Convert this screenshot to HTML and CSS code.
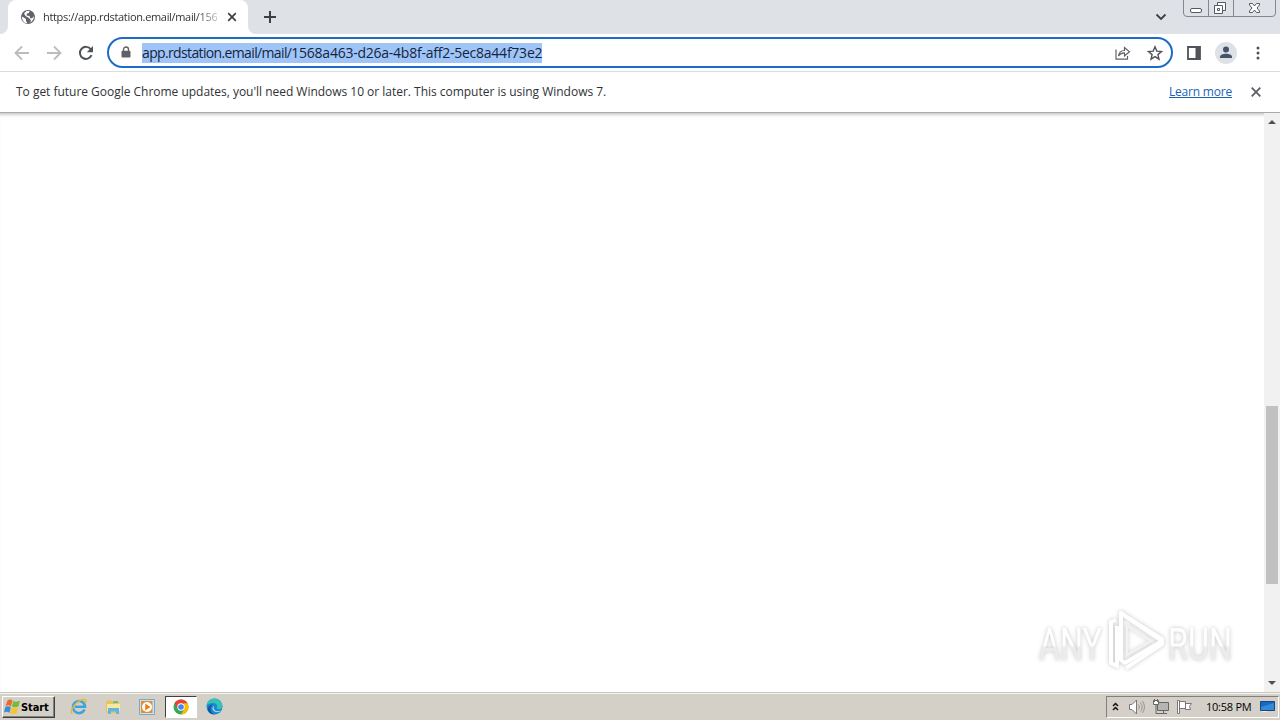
FILE: index.html
```
<!DOCTYPE html>
<html lang="en">
<head>
    <meta charset="UTF-8">
    <title>app.rdstation.email</title>
    <link rel="stylesheet" href="styles.css">
</head>
<body>
<div class="desktop">
    <header class="tab-strip">
        <div class="edge"></div>
        <div class="tab">
            <svg width="16" height="16" viewBox="0 0 16 16"><circle cx="8" cy="8" r="7" fill="#5f6368"/><path d="M2.200 7.500 6 10v2l1.500 2.200C4 14.500 1.500 11 2.200 7.500zM6.500 1.900 9.500 2l-.5 2-2 .5-.5 2 3 .5 1 2.500 2-.5 1.500-2c0 3-1.500 5.500-4 6.500l1-2-2-2.500-3.500-2-1.500-2.500z" fill="#fff"/></svg>
            <span class="tab-title">https://app.rdstation.email/mail/156</span>
            <svg class="tab-close" width="10" height="10" viewBox="0 0 10 10"><path d="M1.200 1.200l7.600 7.600M8.800 1.200L1.200 8.800" stroke="#3c4043" stroke-width="1.700"/></svg>
        </div>
        <div class="after-tab"></div>
        <div class="strip-rest">
            <svg width="14" height="14" viewBox="0 0 14 14"><path d="M7 1v12M1 7h12" stroke="#3c4043" stroke-width="2"/></svg>
            <svg class="tab-search" width="12" height="8" viewBox="0 0 12 8"><path d="M1.500 1.500 6 6l4.500-4.500" fill="none" stroke="#3c4043" stroke-width="1.800"/></svg>
            <svg class="window-buttons" width="94" height="18" viewBox="0 0 94 18">
                <path d="M.5 0v13q0 3.500 3.500 3.500h85q3.500 0 3.500-3.500V0M25.500 0v16M50.500 0v16" fill="none" stroke="#83878f"/>
                <g fill="#fff" stroke="#555a62">
                    <rect x="7.500" y="8.500" width="11" height="4" rx="1.500"/>
                    <path d="M34.500 2.500h8v8h-8z"/><path d="M31.500 5.500h8v8h-8zM34.500 8.500h2v2h-2z"/>
                    <path d="M66.500 3.500h3l2 2.500 2-2.500h3v1.500L74 8l2.500 3v1.500h-3l-2-2.500-2 2.500h-3V11L69 8l-2.500-3z"/>
                </g>
            </svg>
        </div>
    </header>

    <nav class="toolbar">
        <svg class="nav-icon" width="16" height="16" viewBox="0 0 16 16"><path d="M15 8H2M8 1.500 1.500 8 8 14.500" fill="none" stroke="#babcbe" stroke-width="1.800"/></svg>
        <svg class="nav-icon" width="16" height="16" viewBox="0 0 16 16"><path d="M1 8h13M8 1.500 14.500 8 8 14.500" fill="none" stroke="#babcbe" stroke-width="1.800"/></svg>
        <svg class="nav-icon" width="16" height="16" viewBox="0 0 16 16"><path d="M13.500 10.200A6 6 0 1 1 12.800 4.300" fill="none" stroke="#505357" stroke-width="2"/><path d="M15 1v6.200H8.800z" fill="#505357"/></svg>
        <div class="address-bar">
            <svg class="lock" width="10" height="13" viewBox="0 0 10 13"><path d="M2.500 6V3.500a2.500 2.500 0 0 1 5 0V6" fill="none" stroke="#5f6368" stroke-width="1.400"/><rect x=".5" y="4.800" width="9" height="6.700" rx="1" fill="#5f6368"/></svg>
            <span class="url"><span class="host">app.rdstation.email/mail/</span>1568a463-d26a-4b8f-aff2-5ec8a44f73e2</span>
            <svg class="share" width="16" height="16" viewBox="0 0 16 16"><path d="M1 4.500v9.700h11.500V11M3.500 11c.5-4 2.500-5.500 6-5.500v-3l5 4.200-5 4.200v-3c-3 0-4.500.8-6 3.100z" fill="none" stroke="#5f6368" stroke-width="1.200"/></svg>
            <svg width="16" height="16" viewBox="0 0 16 16"><path d="m8 1.800 1.800 4.300 4.700.4-3.600 3.100 1.100 4.600L8 11.700l-4 2.500 1.100-4.600-3.600-3.100 4.700-.4z" fill="none" stroke="#505357" stroke-width="1.400"/></svg>
        </div>
        <svg class="side-panel" width="14" height="14" viewBox="0 0 14 14"><path d="M1 1h12v12H1z" fill="none" stroke="#505357" stroke-width="1.800"/><path d="M8.500 1H13v12H8.500z" fill="#505357"/></svg>
        <svg class="profile" width="22" height="22" viewBox="0 0 22 22"><circle cx="11" cy="11" r="11" fill="#dee1e6"/><circle cx="11" cy="7.500" r="3" fill="#46536b"/><path d="M5 16v-1c0-4.300 12-4.300 12 0v1z" fill="#46536b"/></svg>
        <svg class="menu-dots" width="4" height="14" viewBox="0 0 4 14"><g fill="#505357"><circle cx="2" cy="2" r="1.500"/><circle cx="2" cy="7" r="1.500"/><circle cx="2" cy="12" r="1.500"/></g></svg>
    </nav>

    <div class="infobar">
        <span class="message">To get future Google Chrome updates, you'll need Windows 10 or later. This computer is using Windows 7.</span>
        <a class="learn-more">Learn more</a>
        <svg width="10" height="10" viewBox="0 0 10 10"><path d="M.7.7l8.600 8.600M9.300.7L.7 9.300" stroke="#5f6368" stroke-width="1.900"/></svg>
    </div>

    <main class="page">
        <div class="scrollbar">
            <svg width="8" height="4" viewBox="0 0 8 4"><path d="M0 4 4 0l4 4z" fill="#505050"/></svg>
            <div class="thumb"></div>
            <svg width="8" height="4" viewBox="0 0 8 4"><path d="M0 0l4 4 4-4z" fill="#505050"/></svg>
        </div>
        <svg class="watermark" width="220" height="72" viewBox="0 0 220 72">
            <defs>
                <linearGradient id="fade" x1="0" y1="0" x2="0" y2="1"><stop offset=".5" stop-color="#fff"/><stop offset=".55" stop-color="#ececec"/></linearGradient>
            </defs>
            <g class="mark">
                <text x="9" y="54" textLength="63" lengthAdjust="spacingAndGlyphs" fill="url(#fade)">ANY</text>
                <text x="138" y="54" textLength="64" lengthAdjust="spacingAndGlyphs" fill="url(#fade)">RUN</text>
                <path class="play-back" d="M86 14l-5 2v41l6 3v-40"/>
                <path class="play" d="M91 7v47l4 3 37-22z"/>
                <path class="play" d="M90 7l42 26v5L96 62"/>
                <path class="play-inner" d="M97 20v29l24-14z"/>
            </g>
        </svg>
    </main>

    <footer class="taskbar">
        <div class="start">
            <svg width="17" height="16" viewBox="0 0 17 16"><path d="M3.500 1.500c2-1.500 4-1 5 0L7 7.500c-1.500-1.500-3-1.500-5.500-.5z" fill="#e96b2d"/><path d="M9.300 2c2 1 4 1 6.700-.5l-1.500 6c-2 1-4.500 1-6.500.2z" fill="#79b83b"/><path d="M1.300 8c2-1 4-1 5.500.3l-1.300 5.700C4 12.500 2 12.500 0 13.500z" fill="#3f8ad0"/><path d="M7.700 8.700c2 .8 4 .8 6.500-.2l-1.500 5.700c-2 1-4.300 1-6.300 0z" fill="#f6c52b"/></svg>
            <span>Start</span>
        </div>
        <div class="launchers">
            <svg width="18" height="18" viewBox="0 0 18 18"><path d="M14.500 11.500A6 6 0 1 1 15 8.800H5" fill="none" stroke="#39a5dc" stroke-width="2.600"/><path d="M2.500 15.500C-2 15 6 2 14 1.500c3-.2 2 3 1 4" fill="none" stroke="#e6b637" stroke-width="1.300"/></svg>
            <svg width="18" height="18" viewBox="0 0 18 18"><path d="M2 3l5-1 1 2h7v11H2z" fill="#e7c45d"/><path d="M3 6h13v7H3z" fill="#f8e7a0"/><path d="M4 10h11v6h-3v-2.500H7V16H4z" fill="#62b6dc"/><path d="M9 3h5v2H9z" fill="#76bd72"/></svg>
            <svg width="18" height="18" viewBox="0 0 18 18"><path d="M1.500 1.500h15v15h-15z" fill="#cae4f7" stroke="#6daad5"/><path d="M3 3h11.500v12H3z" fill="#ed8b22"/><circle cx="9" cy="9" r="5" fill="#fff"/><path d="M7.200 5.500 12.500 9 7.200 12.500z" fill="#ec7d17"/></svg>
            <div class="active-app">
                <svg width="16" height="16" viewBox="0 0 16 16"><circle cx="8" cy="8" r="7.500" fill="#34a853"/><path d="M8 8 1.500 4.250A7.500 7.500 0 0 1 14.500 4.250z" fill="#ea4335"/><path d="M8 4.250h6.500A7.500 7.500 0 0 1 8 15.500l3.200-5.600z" fill="#fbbc04"/><path d="M8 8l3.200-3.750H1.500L4.750 10z" fill="#ea4335"/><circle cx="8" cy="8" r="3.700" fill="#fff"/><circle cx="8" cy="8" r="2.800" fill="#4285f4"/></svg>
            </div>
            <svg width="17" height="17" viewBox="0 0 17 17"><circle cx="8.500" cy="8.500" r="8" fill="#168bd4"/><path d="M.5 7.500C1-1 16-2 16.500 8c0 3.500-4.500 4-6 2 2-2 0-5-3.500-5C3.500 5 1 6.500.5 7.500z" fill="#35c4b2"/><path d="M7 6.500C3 9 4.500 16 9.500 16.500 4 17 1 13 2 10c.7-2.500 3-3.500 5-3.500z" fill="#1257a5"/><path d="M8 7.500c-2 5 3.500 7 7 5-3 3.500-9 1-8.500-3z" fill="#d7dad7"/></svg>
        </div>
        <div class="tray">
            <svg width="7" height="9" viewBox="0 0 7 9"><path d="M1 4l2.500-2.500L6 4M1 8l2.500-2.500L6 8" fill="none" stroke="#111" stroke-width="1.500"/></svg>
            <svg class="speaker" width="17" height="16" viewBox="0 0 17 16"><path d="M1.500 5.500H4L8.500 1v14L4 10.500H1.500z" fill="#fff" stroke="#777"/><path d="M10.500 5.500q2 2.500 0 5M12.500 3.500q3.500 4.500 0 9M14.500 2q4 6 0 12" fill="none" stroke="#999"/></svg>
            <svg class="network" width="17" height="16" viewBox="0 0 17 16"><path d="M4.500 3.500h11v8h-11zM6 14.500h8M10.500 12v2" fill="#b5b5b5" stroke="#666"/><path d="M3 6v8.500h3" fill="none" stroke="#666"/><path d="M.5 1.500h5v4h-5z" fill="#fff" stroke="#666"/><path d="M1.500 0v3M4.500 0v3" stroke="#666"/></svg>
            <svg class="flag" width="16" height="16" viewBox="0 0 16 16"><path d="M.5 1.500h2v13h-2zM2.500 2.500h6v7h-6zM8.500 4.500h6l-2 3 1 3H8.500z" fill="#fff" stroke="#777"/></svg>
            <span class="clock">10:58 PM</span>
            <svg width="16" height="13" viewBox="0 0 16 13"><path d="M.5 1.500h14v9H.5z" fill="#1769c2" stroke="#17477e"/><path d="M1 7l13-4v7H1z" fill="#3489d8"/><path d="M2 11.500h5" stroke="#eee"/></svg>
        </div>
    </footer>
</div>
</body>
</html>
```
FILE: styles.css
```
body {
    margin: 0;
    font-family: "Open Sans", "Noto Sans", sans-serif;
    color: #303236;
    background: #fff;
}

svg {
    display: block;
    flex-shrink: 0;
}

.desktop {
    display: flex;
    flex-direction: column;
    width: 1280px;
    height: 720px;
    overflow: hidden;
}

.tab-strip {
    display: flex;
    height: 34px;
    background: #fff;
}

.edge {
    width: 8px;
    background: #dee1e6;
    border-bottom-right-radius: 8px;
}

.tab {
    display: flex;
    align-items: center;
    box-sizing: border-box;
    width: 240px;
    padding: 0 11px 0 12px;
    background: linear-gradient(#dee1e6 50%, #fff 50%);
    position: relative;
    z-index: 0;
}

.tab::before {
    content: "";
    position: absolute;
    inset: 0;
    z-index: -1;
    background: #fff;
    border-radius: 8px 8px 0 0;
}

.tab-title {
    margin-left: 7px;
    padding-bottom: 1px;
    white-space: nowrap;
    font-size: 11px;
    letter-spacing: -0.33px;
    -webkit-mask-image: linear-gradient(to right, #000 88%, rgba(0, 0, 0, 0.3));
    mask-image: linear-gradient(to right, #000 88%, rgba(0, 0, 0, 0.3));
}

.tab-close {
    margin-left: auto;
}

.after-tab {
    width: 15px;
    background: #dee1e6;
    border-bottom-left-radius: 8px;
}

.strip-rest {
    display: flex;
    flex: 1;
    align-items: center;
    padding-right: 3px;
    background: #dee1e6;
}

.tab-search {
    margin: 0 16px 0 auto;
}

.window-buttons {
    align-self: flex-start;
}

.toolbar {
    display: flex;
    align-items: center;
    box-sizing: border-box;
    height: 38px;
    padding-left: 14px;
    border-bottom: 1px solid #dadce0;
}

.nav-icon {
    margin-right: 16px;
}

.address-bar {
    display: flex;
    align-items: center;
    box-sizing: border-box;
    width: 1066px;
    height: 31px;
    margin-left: -3px;
    padding: 0 8px 0 12px;
    border: 2px solid #1d6bc9;
    border-radius: 16px;
}

.url {
    height: 20px;
    margin: 0 auto 0 11px;
    line-height: 19px;
    font-size: 14px;
    letter-spacing: -0.24px;
    white-space: nowrap;
    background: #9fc5f8;
    color: #15243c;
}

.host {
    letter-spacing: -0.64px;
}

.share {
    margin-right: 16px;
}

.side-panel {
    margin-left: 14px;
}

.profile {
    margin-left: 14px;
}

.menu-dots {
    margin-left: 19px;
}

.infobar {
    display: flex;
    align-items: center;
    box-sizing: border-box;
    height: 41px;
    padding: 0 19px 0 16px;
    border-bottom: 1px solid #aaa;
    font-size: 12px;
    letter-spacing: -0.02px;
}

.message {
    padding-bottom: 2px;
    white-space: nowrap;
}

.learn-more {
    margin: 0 19px 0 auto;
    padding-bottom: 2px;
    letter-spacing: -0.2px;
    color: #1a64b5;
    text-decoration: underline;
}

.page {
    display: flex;
    justify-content: flex-end;
    position: relative;
    height: 579px;
    box-shadow: inset 0 4px 3px -2px #ccc;
}

.scrollbar {
    display: flex;
    flex-direction: column;
    align-items: center;
    box-sizing: border-box;
    width: 16px;
    padding: 7px 0;
    background: #f1f1f1;
}

.thumb {
    width: 12px;
    height: 178px;
    margin: 282px 0 auto;
    background: #c1c1c1;
}

.watermark {
    position: absolute;
    right: 30px;
    bottom: 14px;
}

.mark {
    filter: drop-shadow(0 0 2px #c4c4c4);
    font-family: Roboto, sans-serif;
    font-size: 44px;
}

.play,
.play-back,
.play-inner {
    fill: none;
    stroke: #fff;
    stroke-width: 4;
    stroke-linejoin: round;
}

.play-inner {
    stroke: #f3f3f3;
    stroke-width: 2;
}

.taskbar {
    display: flex;
    align-items: center;
    box-sizing: border-box;
    height: 28px;
    padding: 1px 1px 1px 2px;
    border-top: 1px solid #c9c6c0;
    box-shadow: inset 0 1px #f4f2ee;
    background: #d4d0c8;
}

.start {
    display: flex;
    align-items: center;
    box-sizing: border-box;
    width: 53px;
    height: 22px;
    padding-left: 1px;
    border: 1px solid;
    border-color: #fff #404040 #404040 #fff;
    box-shadow: inset -1px -1px #808080;
    font: bold 11px "DejaVu Sans Condensed", sans-serif;
    letter-spacing: -0.1px;
    color: #000;
}

.start span {
    padding-top: 1px;
}

.launchers {
    display: flex;
    align-items: center;
    gap: 16px;
    margin-left: 15px;
}

.active-app {
    display: flex;
    align-items: center;
    justify-content: center;
    box-sizing: border-box;
    width: 32px;
    height: 22px;
    margin: 0 -7px;
    border: 1px solid;
    border-color: #404040 #fff #fff #404040;
    background: #fff;
}

.tray {
    display: flex;
    align-items: center;
    box-sizing: border-box;
    width: 173px;
    height: 22px;
    margin-left: auto;
    padding-left: 5px;
    border: 1px solid;
    border-color: #808080 #fff #fff #808080;
}

.speaker {
    margin-left: 9px;
}

.network {
    margin-left: 8px;
}

.flag {
    margin-left: 7px;
}

.clock {
    width: 46px;
    margin: 0 8px 0 13px;
    font-size: 11px;
    letter-spacing: -0.25px;
    white-space: nowrap;
    color: #000;
}
```
